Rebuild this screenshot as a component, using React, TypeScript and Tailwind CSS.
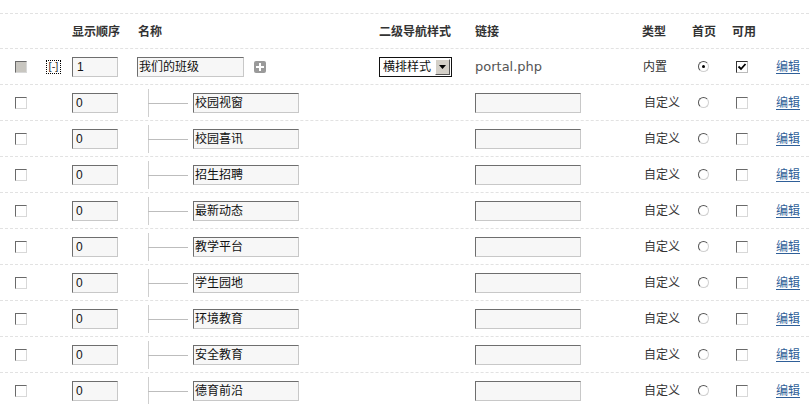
import React from "react";

const FONT = { fontFamily: '"Liberation Sans", "Noto Sans CJK SC", sans-serif' };

const children = ["校园视窗", "校园喜讯", "招生招聘", "最新动态", "教学平台", "学生园地", "环境教育", "安全教育", "德育前沿"];

const GRID = "grid grid-cols-[46px_26px_65px_242px_96px_167px_50px_40px_44px_33px] items-center";

function Box({ disabled = false }: { disabled?: boolean }) {
  return (
    <span
      className={`block w-[12px] h-[12px] border border-t-[#6a6a6a] border-l-[#6a6a6a] border-r-[#d8d8d8] border-b-[#d8d8d8] ${disabled ? "bg-[#c8c6c0]" : "bg-white"}`}
    />
  );
}

function CheckedBox() {
  return (
    <span className="relative block w-[12px] h-[12px] border border-t-[#333] border-l-[#333] border-r-[#bbb] border-b-[#bbb] bg-white">
      <svg viewBox="0 0 10 10" className="absolute left-0 top-0 w-[10px] h-[10px]">
        <path d="M1.5 4.5 L4 7 L8.5 2" stroke="#000" strokeWidth="1.8" fill="none" />
      </svg>
    </span>
  );
}

function Radio({ checked = false }: { checked?: boolean }) {
  return (
    <span className="relative block w-[11px] h-[11px] rounded-full border border-t-[#555] border-l-[#555] border-r-[#d0d0d0] border-b-[#d0d0d0] bg-white">
      {checked && <span className="absolute left-[3px] top-[3px] w-[3px] h-[3px] rounded-full bg-black" />}
    </span>
  );
}

function TextInput({ value, w, pl = "pl-[2px]" }: { value: string; w: string; pl?: string }) {
  return (
    <div
      className={`${w} h-[20px] ${pl} flex items-center border border-t-[#6e6e6e] border-l-[#6e6e6e] border-r-[#c8c8c8] border-b-[#c8c8c8] bg-[#f7f7f7] text-[12px] text-[#111] leading-none`}
    >
      {value}
    </div>
  );
}

export default function App() {
  return (
    <div className="w-[809px] h-[404px] bg-white overflow-hidden pt-[13px]" style={FONT}>
      {/* header */}
      <div className={`${GRID} h-[35px] border-t border-dashed border-[#e2e2e2] text-[12px] font-bold text-[#333]`}>
        <div />
        <div />
        <div className="pt-[1px]">显示顺序</div>
        <div className="pl-[1px] pt-[1px]">名称</div>
        <div className="pt-[1px]">二级导航样式</div>
        <div className="pt-[1px]">链接</div>
        <div className="pt-[1px]">类型</div>
        <div className="pt-[1px]">首页</div>
        <div className="pt-[1px]">可用</div>
        <div />
      </div>

      {/* first row */}
      <div className={`${GRID} h-[36px] border-t border-dashed border-[#e2e2e2] text-[12px] text-[#333]`}>
        <div className="pl-[15px]">
          <Box disabled />
        </div>
        <div>
          <span className="flex items-center justify-center w-[15px] h-[14px] border border-dotted border-black text-[11px] leading-none text-[#333]">[-]</span>
        </div>
        <div>
          <TextInput value="1" w="w-[46px]" pl="pl-[4px]" />
        </div>
        <div className="flex items-center">
          <TextInput value="我们的班级" w="w-[107px]" pl="pl-[1px]" />
          <span className="ml-[10px] w-[12px] h-[12px] rounded-[2px] bg-[#9a9a9a] relative">
            <span className="absolute left-[2px] top-[5px] w-[8px] h-[2px] bg-white" />
            <span className="absolute left-[5px] top-[2px] w-[2px] h-[8px] bg-white" />
          </span>
        </div>
        <div>
          <div className="w-[73px] h-[20px] border border-[#111] flex items-center bg-white">
            <span className="pl-[3px] text-[12px] text-[#111] flex-1 leading-none">横排样式</span>
            <span className="w-[15px] h-[16px] mr-[1px] bg-[#d4d0c8] border border-t-white border-l-white border-r-[#555] border-b-[#555] flex items-center justify-center">
              <svg viewBox="0 0 7 4" className="w-[7px] h-[4px]">
                <path d="M0 0 H7 L3.5 4 Z" fill="#000" />
              </svg>
            </span>
          </div>
        </div>
        <div className="text-[13px] text-[#555]" style={{ fontFamily: '"DejaVu Sans", sans-serif' }}>
          portal.php
        </div>
        <div className="pl-[1px]">内置</div>
        <div className="pl-[6px]">
          <Radio checked />
        </div>
        <div className="pl-[4px]">
          <CheckedBox />
        </div>
        <div>
          <a className="text-[#2f5f98] underline underline-offset-2">编辑</a>
        </div>
      </div>

      {children.map((name) => (
        <div key={name} className={`${GRID} h-[36px] border-t border-dashed border-[#e2e2e2] text-[12px] text-[#333]`}>
          <div className="pl-[15px]">
            <Box />
          </div>
          <div />
          <div>
            <TextInput value="0" w="w-[46px]" pl="pl-[3px]" />
          </div>
          <div className="flex items-center h-full">
            <div className="ml-[11px] relative w-[45px] h-[28px]">
              <span className="absolute left-0 top-0 w-px h-[28px] bg-[#cfcfcf]" />
              <span className="absolute left-0 top-[14px] w-[40px] h-px bg-[#bdbdbd]" />
            </div>
            <TextInput value={name} w="w-[106px]" pl="pl-[1px]" />
          </div>
          <div />
          <div>
            <TextInput value="" w="w-[106px]" />
          </div>
          <div className="pl-[2px]">自定义</div>
          <div className="pl-[6px]">
            <Radio />
          </div>
          <div className="pl-[4px]">
            <Box />
          </div>
          <div>
            <a className="text-[#2f5f98] underline underline-offset-2">编辑</a>
          </div>
        </div>
      ))}
    </div>
  );
}
